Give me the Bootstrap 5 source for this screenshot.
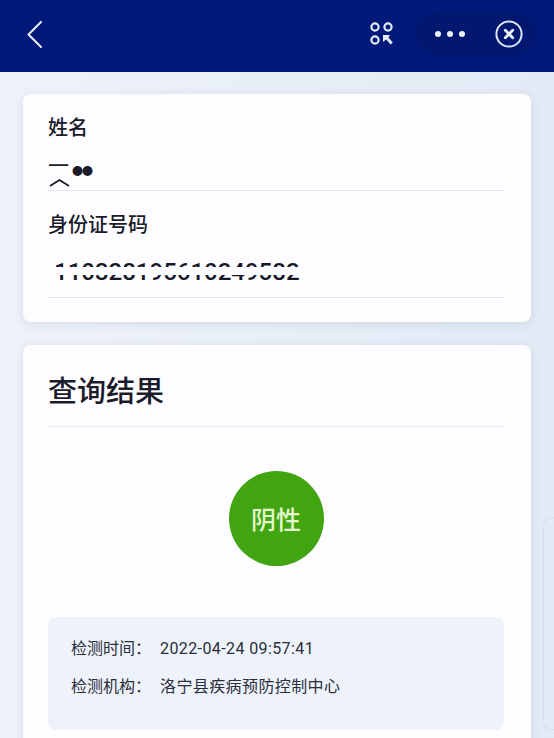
<!DOCTYPE html>
<html lang="zh-CN">
<head>
<meta charset="UTF-8">
<meta name="viewport" content="width=device-width, initial-scale=1.0">
<title>查询结果</title>
<link href="https://cdn.jsdelivr.net/npm/bootstrap@5.3.3/dist/css/bootstrap.min.css" rel="stylesheet">
<style>
html, body { height: 100%; }
body { background: linear-gradient(90deg, #eef3f9, #e3eaf5); font-family: "Noto Sans CJK SC", "Liberation Sans", sans-serif; color: #1b1b2b; overflow: hidden; }
.top-bar { height: 72px; background: #011a7a; padding: 0 17px 4px 27px; }
.scan-icon { margin-right: 22px; }
.more-pill { height: 42px; padding: 0 14px 0 19px; gap: 30px; background: #011770; border-radius: 21px; }
.page-body { padding: 22px 23px 0; }
.info-card { background: #fdfdff; border-radius: 8px; box-shadow: 0 2px 10px rgba(120,140,175,.22); padding: 0 27px 0 25px; }
.id-card { height: 228px; margin-bottom: 23px; padding-top: 19px; }
.result-card { height: 500px; }
.field-label { font-size: 20px; line-height: 28px; font-weight: 500; }
.name-row { height: 50px; padding-top: 11px; border-bottom: 1px solid #e4e8ee; font-size: 21px; line-height: 24px; position: relative; }
.name-stars { font-size: 11px; line-height: 12px; margin: 12px 0 0 3px; letter-spacing: -1px; }
.name-hat { position: absolute; left: 1px; top: 38px; }
.label-gap { margin-top: 19px; }
.id-row { height: 60px; padding: 22px 0 0 6px; border-bottom: 1px solid #e4e8ee; position: relative; }
.id-text { font-family: "Roboto", "Liberation Sans", sans-serif; font-size: 24px; line-height: 24px; font-weight: 500; color: #17172a; }
.id-band { position: absolute; left: 0; right: 0; top: 29px; height: 8px; background: #fdfdff; }
.result-title { height: 82px; border-bottom: 1px solid #e6eaf0; font-size: 29px; line-height: 88px; font-weight: 500; }
.result-dot { width: 95px; height: 95px; margin: 44px auto 51px; background: #41a512; color: #e4f7cf; font-size: 25px; font-weight: 500; }
.detail-box { height: 113px; background: #eef3fb; border-radius: 8px; padding: 12px 23px; font-size: 16px; color: #2a2d3a; }
.detail-line { line-height: 37px; }
.detail-key { width: 89px; }
.detail-val { font-family: "Roboto", "Noto Sans CJK SC", sans-serif; letter-spacing: .4px; }
.edge-tab { position: absolute; right: 0; top: 517px; width: 11px; height: 213px; border: 1px solid #d6deea; border-right: 0; border-radius: 8px 0 0 8px; }
</style>
</head>
<body>
<div class="top-bar d-flex align-items-center">
    <svg width="15" height="27" viewBox="0 0 15 27" fill="none" stroke="#e8edf8" stroke-width="2" stroke-linecap="round" stroke-linejoin="round"><path d="M14 1 1.5 13.5 14 26"/></svg>
    <div class="ms-auto d-flex align-items-center">
        <svg class="scan-icon" width="24" height="24" viewBox="0 0 24 24" fill="none" stroke="#e4eaf6" stroke-width="2.2"><circle cx="5" cy="5" r="3.6"/><circle cx="18" cy="5" r="3.6"/><circle cx="5" cy="18" r="3.6"/><path fill="#e4eaf6" stroke="none" d="M13 13h7l-1.6 2.4 4.4 5-2.2 2-4.4-5L13 20z"/></svg>
        <div class="more-pill d-flex align-items-center">
            <svg width="30" height="6" viewBox="0 0 30 6" fill="#eef2fb"><circle cx="3" cy="3" r="3"/><circle cx="15" cy="3" r="3"/><circle cx="27" cy="3" r="3"/></svg>
            <svg width="28" height="28" viewBox="0 0 28 28" fill="none" stroke="#dde5f4"><circle cx="14" cy="14" r="12.6" stroke-width="2"/><path stroke="#eef2fb" stroke-width="2.8" stroke-linecap="round" d="m10.3 10.3 7.4 7.4m0-7.4-7.4 7.4"/></svg>
        </div>
    </div>
</div>

<div class="page-body">
    <div class="info-card id-card">
        <div class="field-label">姓名</div>
        <div class="name-row d-flex">
            <span>一</span><span class="name-stars">●●</span>
            <svg class="name-hat" width="21" height="8" viewBox="0 0 21 8" fill="none" stroke="#1b1b2b" stroke-width="1.8"><path d="M1 7 10.5 1 20 7"/></svg>
        </div>
        <div class="field-label label-gap">身份证号码</div>
        <div class="id-row">
            <div class="id-text">110328195610249582</div>
            <div class="id-band"></div>
        </div>
    </div>

    <div class="info-card result-card">
        <div class="result-title">查询结果</div>
        <div class="result-dot rounded-circle d-flex align-items-center justify-content-center">阴性</div>
        <div class="detail-box">
            <div class="detail-line d-flex align-items-baseline"><span class="detail-key">检测时间：</span><span class="detail-val">2022-04-24 09:57:41</span></div>
            <div class="detail-line d-flex align-items-baseline"><span class="detail-key">检测机构：</span><span class="detail-val">洛宁县疾病预防控制中心</span></div>
        </div>
    </div>
</div>
<div class="edge-tab"></div>
<script src="https://cdn.jsdelivr.net/npm/bootstrap@5.3.3/dist/js/bootstrap.bundle.min.js"></script>
</body>
</html>
